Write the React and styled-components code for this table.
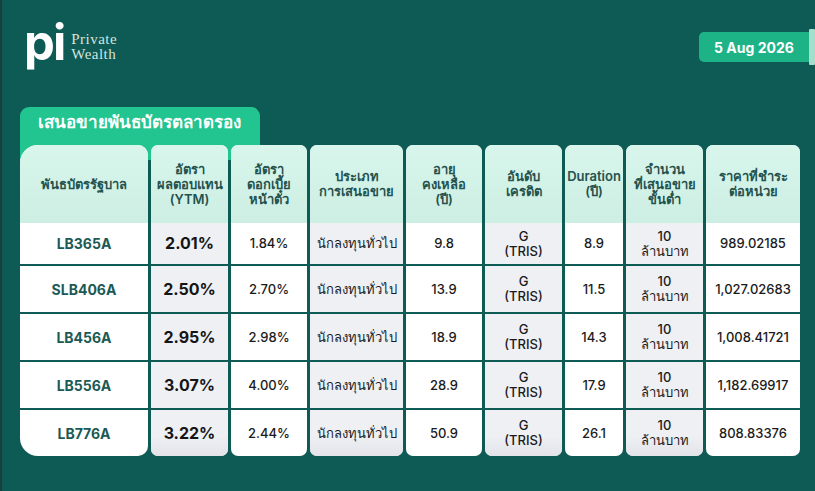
import React from "react";
import styled, { createGlobalStyle } from "styled-components";

const GlobalStyle = createGlobalStyle`
  html, body {
    margin: 0;
    padding: 0;
    background: #0e5a55;
  }
  body {
    font-family: "Inter", "Noto Sans", "DejaVu Sans", sans-serif;
  }
`;

const Page = styled.div`
  width: 815px;
  height: 491px;
  box-sizing: border-box;
  background: #0e5a55;
  border-left: 2px solid #17403d;
  padding: 20px 0 0 18px;
  overflow: hidden;
`;

const TopBar = styled.div`
  display: flex;
  justify-content: space-between;
  align-items: flex-start;
  height: 87px;
`;

const Logo = styled.div`
  display: flex;
  align-items: flex-start;
  gap: 7px;
  padding-left: 4px;
`;

const LogoMark = styled.span`
  font-family: "Inter", sans-serif;
  font-weight: 700;
  font-size: 49px;
  line-height: 46px;
  letter-spacing: -2px;
  color: #ffffff;
`;

const LogoText = styled.div`
  font-family: "Liberation Serif", serif;
  font-size: 15px;
  line-height: 15px;
  color: #d3e4df;
  padding-top: 12px;
  letter-spacing: 0.5px;
`;

const DateWrap = styled.div`
  display: flex;
  align-items: center;
  margin-top: 9px;
`;

const DateBadge = styled.div`
  width: 110px;
  height: 30px;
  background: #1eb386;
  border-radius: 5px 0 0 5px;
  color: #ffffff;
  font-weight: 700;
  font-size: 14px;
  display: flex;
  align-items: center;
  justify-content: center;
`;

const DateEdge = styled.div`
  width: 6px;
  height: 36px;
  background: #a3dfcb;
  border-radius: 1px;
`;

const Tab = styled.div`
  width: 240px;
  height: 53px;
  box-sizing: border-box;
  background: #22c48f;
  border-radius: 9px 9px 0 0;
  color: #ffffff;
  font-weight: 700;
  font-size: 17px;
  line-height: 30px;
  padding: 0 0 0 18px;
`;

const Table = styled.div`
  display: flex;
  gap: 3px;
  margin-top: -15px;
  position: relative;
`;

const Column = styled.div`
  width: ${(p) => p.$w}px;
  display: flex;
  flex-direction: column;
  overflow: hidden;
  border-radius: ${(p) => (p.$first ? "18px 10px 10px 18px" : "7px")};
  background: ${(p) => (p.$gray ? "#eef0f4" : "#ffffff")};
`;

const HeadCell = styled.div`
  height: 78px;
  box-sizing: border-box;
  background: linear-gradient(180deg, #d8f6ec 0%, #cdeee3 100%);
  color: #24524e;
  font-size: 13px;
  font-weight: 600;
  line-height: 15px;
  text-align: center;
  display: flex;
  align-items: center;
  justify-content: center;
  padding: 0 2px;
`;

const BodyCell = styled.div`
  height: ${(p) => (p.$top ? 41 : 48)}px;
  box-sizing: border-box;
  border-top: ${(p) => (p.$top ? "none" : "2px solid #0e5a55")};
  background: ${(p) =>
    p.$last && p.$gray ? "linear-gradient(180deg, #eef0f4 55%, #e2e4e9 100%)" : "transparent"};
  display: flex;
  align-items: center;
  justify-content: center;
  text-align: center;
  font-size: 13px;
  font-weight: 500;
  line-height: 15px;
  color: #1b1b1b;
`;

const Code = styled.span`
  font-size: 14px;
  font-weight: 700;
  color: #1b5a55;
`;

const Ytm = styled.span`
  font-size: 16px;
  font-weight: 700;
  color: #151515;
`;

const columns = [
  { key: "code", w: 128, head: ["พันธบัตรรัฐบาล"] },
  { key: "ytm", w: 77, gray: true, head: ["อัตรา", "ผลตอบแทน", "(YTM)"] },
  { key: "coupon", w: 76, head: ["อัตรา", "ดอกเบี้ย", "หน้าตั๋ว"] },
  { key: "type", w: 93, gray: true, head: ["ประเภท", "การเสนอขาย"] },
  { key: "life", w: 76, head: ["อายุ", "คงเหลือ", "(ปี)"] },
  { key: "rating", w: 77, gray: true, head: ["อันดับ", "เครดิต"] },
  { key: "duration", w: 58, head: ["Duration", "(ปี)"] },
  { key: "min", w: 77, gray: true, head: ["จำนวน", "ที่เสนอขาย", "ขั้นต่ำ"] },
  { key: "price", w: 94, head: ["ราคาที่ชำระ", "ต่อหน่วย"] },
];

const rows = [
  { code: "LB365A", ytm: "2.01%", coupon: "1.84%", life: "9.8", duration: "8.9", price: "989.02185" },
  { code: "SLB406A", ytm: "2.50%", coupon: "2.70%", life: "13.9", duration: "11.5", price: "1,027.02683" },
  { code: "LB456A", ytm: "2.95%", coupon: "2.98%", life: "18.9", duration: "14.3", price: "1,008.41721" },
  { code: "LB556A", ytm: "3.07%", coupon: "4.00%", life: "28.9", duration: "17.9", price: "1,182.69917" },
  { code: "LB776A", ytm: "3.22%", coupon: "2.44%", life: "50.9", duration: "26.1", price: "808.83376" },
];

function renderValue(key, row) {
  switch (key) {
    case "code":
      return <Code>{row.code}</Code>;
    case "ytm":
      return <Ytm>{row.ytm}</Ytm>;
    case "type":
      return "นักลงทุนทั่วไป";
    case "rating":
      return (
        <span>
          G<br />(TRIS)
        </span>
      );
    case "min":
      return (
        <span>
          10<br />ล้านบาท
        </span>
      );
    default:
      return row[key];
  }
}

export default function App() {
  return (
    <>
      <GlobalStyle />
      <Page>
        <TopBar>
          <Logo>
            <LogoMark>pi</LogoMark>
            <LogoText>
              Private
              <br />
              Wealth
            </LogoText>
          </Logo>
          <DateWrap>
            <DateBadge>5 Aug 2026</DateBadge>
            <DateEdge />
          </DateWrap>
        </TopBar>

        <Tab>เสนอขายพันธบัตรตลาดรอง</Tab>

        <Table>
          {columns.map((col) => (
            <Column key={col.key} $w={col.w} $gray={col.gray} $first={col.key === "code"}>
              <HeadCell>
                <span>
                  {col.head.map((line, i) => (
                    <React.Fragment key={i}>
                      {i > 0 && <br />}
                      {line}
                    </React.Fragment>
                  ))}
                </span>
              </HeadCell>
              {rows.map((row, i) => (
                <BodyCell key={row.code} $top={i === 0} $last={i === rows.length - 1} $gray={col.gray}>
                  {renderValue(col.key, row)}
                </BodyCell>
              ))}
            </Column>
          ))}
        </Table>
      </Page>
    </>
  );
}
